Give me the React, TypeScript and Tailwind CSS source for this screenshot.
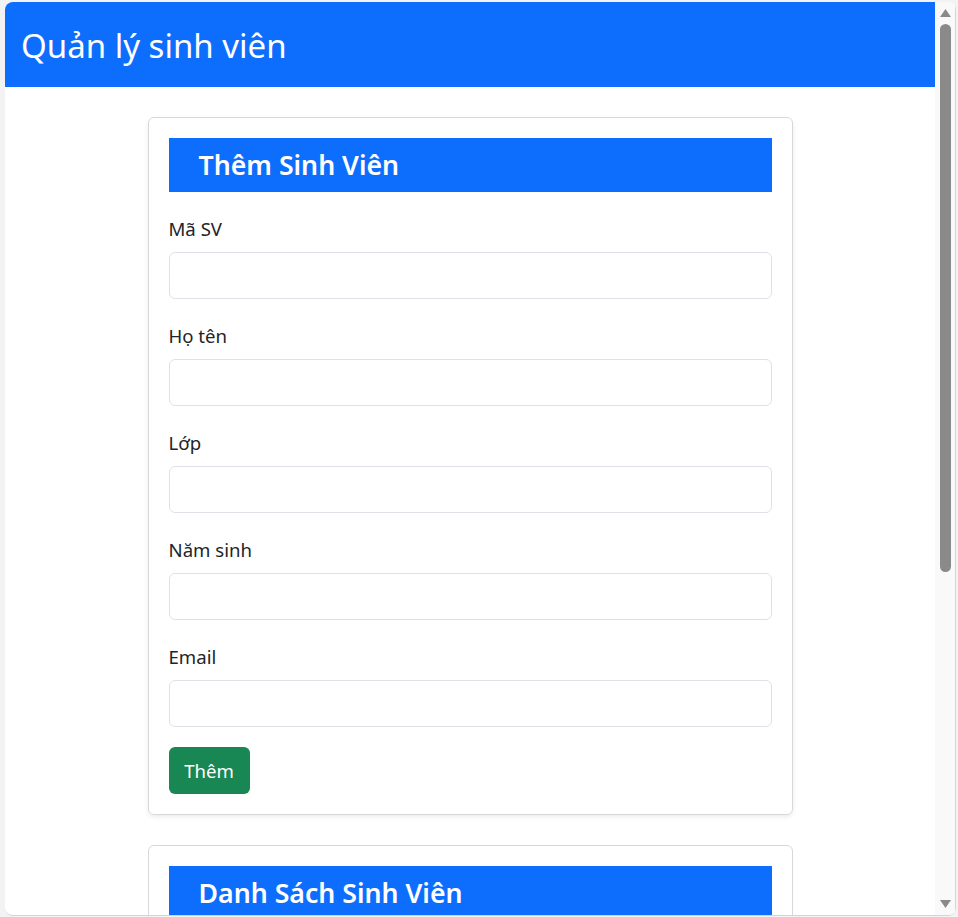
import React from "react";

const fields = ["Mã SV", "Họ tên", "Lớp", "Năm sinh", "Email"];

function Field({ label, last }: { label: string; last?: boolean }) {
    return (
        <div className={last ? "mb-[20px]" : "mb-[23px]"}>
            <label className="block text-[18.6px] leading-[27px] mb-[10px] text-[#212529]">{label}</label>
            <input
                type="text"
                className="block w-full h-[47px] rounded-[6px] border border-[#dee2e6] bg-white px-3 outline-none"
            />
        </div>
    );
}

function Scrollbar() {
    return (
        <div className="w-[21px] flex flex-col items-center bg-[#f9f9f9] border-r border-[#d4d4d4]">
            <div className="h-[22px] flex items-center justify-center">
                <svg width="11" height="8" viewBox="0 0 11 8">
                    <path d="M5.5 0 L11 8 L0 8 Z" fill="#8a8a8a" />
                </svg>
            </div>
            <div className="w-[11px] h-[548px] rounded-full bg-[#8a8a8a]" />
            <div className="flex-1" />
            <div className="h-[22px] flex items-center justify-center">
                <svg width="11" height="8" viewBox="0 0 11 8">
                    <path d="M0 0 L11 0 L5.5 8 Z" fill="#8a8a8a" />
                </svg>
            </div>
        </div>
    );
}

export default function App() {
    return (
        <div
            className="w-[958px] h-[917px] bg-[#f3f3f3] pl-[5px] pt-[2px] pr-[2px] pb-[1px]"
            style={{ fontFamily: '"Noto Sans", "Open Sans", sans-serif' }}
        >
            <div className="h-full flex rounded-[8px] overflow-hidden bg-white border-b border-[#d4d4d4]">
                <div className="flex-1 overflow-hidden">
                    {/* Navbar */}
                    <div className="h-[85px] bg-[#0d6efd] flex items-center px-4">
                        <h1 className="text-white text-[33px] font-normal leading-none mt-[2px]">Quản lý sinh viên</h1>
                    </div>

                    <div className="w-[645px] mx-auto mt-[30px]">
                        {/* Add form card */}
                        <div className="rounded-[6px] border border-[#d6d8db] shadow-[0_2px_4px_rgba(0,0,0,0.08)] p-5">
                            <div className="h-[54px] bg-[#0d6efd] flex items-center pl-[30px] mb-[23px]">
                                <h2 className="text-white text-[26.7px] font-semibold mt-[1px]">Thêm Sinh Viên</h2>
                            </div>
                            {fields.map((f, i) => (
                                <Field key={f} label={f} last={i === fields.length - 1} />
                            ))}
                            <button className="h-[47px] w-[81px] rounded-[6px] bg-[#198754] text-white text-[18.6px]">Thêm</button>
                        </div>

                        {/* List card */}
                        <div className="mt-[30px] rounded-[6px] border border-[#d6d8db] p-5">
                            <div className="h-[54px] bg-[#0d6efd] flex items-center pl-[30px]">
                                <h2 className="text-white text-[26.7px] font-semibold mt-[1px]">Danh Sách Sinh Viên</h2>
                            </div>
                        </div>
                    </div>
                </div>
                <Scrollbar />
            </div>
        </div>
    );
}
